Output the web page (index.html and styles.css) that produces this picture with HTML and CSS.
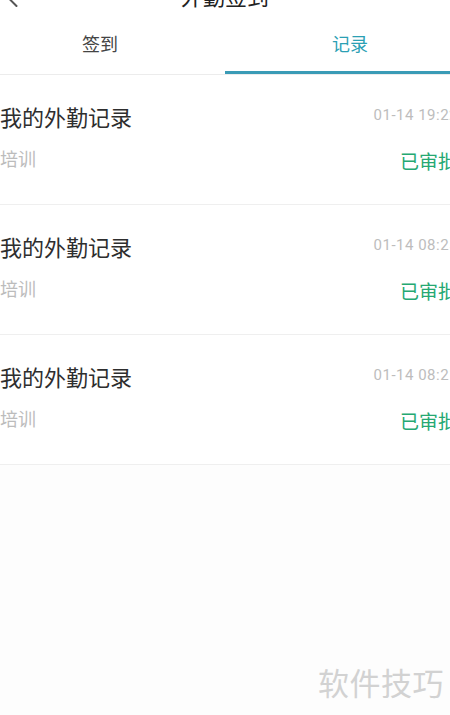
FILE: index.html
```html
<!DOCTYPE html>
<html lang="zh-CN">
<head>
    <meta charset="UTF-8">
    <title>外勤签到</title>
    <link rel="stylesheet" href="styles.css">
</head>
<body>
<div class="page">
    <div class="top_bar">
        <span class="back_btn">
            <svg width="10" height="16" viewBox="0 0 10 16"><polyline points="8.5,1 1.5,8 8.5,15" fill="none" stroke="#555" stroke-width="2" stroke-linecap="round" stroke-linejoin="round"/></svg>
        </span>
        <span class="top_title">外勤签到</span>
        <span></span>
    </div>
    <div class="tab_wrap">
        <div class="tab_item">签到</div>
        <div class="tab_item active">记录</div>
    </div>
    <ul class="record_list">
        <li class="record_item">
            <div class="record_line">
                <span class="record_title">我的外勤记录</span>
                <span class="record_time">01-14 19:22</span>
            </div>
            <div class="record_line">
                <span class="record_type">培训</span>
                <span class="record_state">已审批</span>
            </div>
        </li>
        <li class="record_item">
            <div class="record_line">
                <span class="record_title">我的外勤记录</span>
                <span class="record_time">01-14 08:25</span>
            </div>
            <div class="record_line">
                <span class="record_type">培训</span>
                <span class="record_state">已审批</span>
            </div>
        </li>
        <li class="record_item">
            <div class="record_line">
                <span class="record_title">我的外勤记录</span>
                <span class="record_time">01-14 08:21</span>
            </div>
            <div class="record_line">
                <span class="record_type">培训</span>
                <span class="record_state">已审批</span>
            </div>
        </li>
    </ul>
</div>
<div class="watermark">软件技巧</div>
</body>
</html>
```

FILE: styles.css
```css
* {
    padding: 0;
    margin: 0;
    box-sizing: border-box;
}

html, body {
    height: 100%;
}

body {
    background-color: #fdfdfd;
    font-family: Roboto, "Noto Sans CJK SC", sans-serif;
    color: #333;
    overflow: hidden;
}

.page {
    width: 500px;
    margin-left: -25px;
    background-color: #fff;
}

.top_bar {
    height: 56px;
    margin-top: -48px;
    display: grid;
    grid-template-columns: 1fr auto 1fr;
    align-items: end;
    background-color: #fff;
}
.top_bar .back_btn {
    padding-left: 33px;
    height: 17px;
}
.top_bar .top_title {
    font-family: "Noto Sans CJK SC", sans-serif;
    font-size: 22px;
    line-height: 22px;
    padding-bottom: 2px;
    color: #222;
}

.tab_wrap {
    display: flex;
    border-bottom: 1px solid #ececec;
}
.tab_wrap .tab_item {
    flex: 1;
    height: 66px;
    padding-top: 22px;
    text-align: center;
    font-family: "Noto Sans CJK SC", sans-serif;
    font-size: 18px;
    line-height: 26px;
    color: #444;
}
.tab_wrap .tab_item.active {
    color: #2ba0b4;
    border-bottom: 3px solid #3a9bb6;
}

.record_list {
    list-style: none;
    background-color: #fff;
}
.record_list .record_item {
    height: 130px;
    padding: 26px 18px 0 25px;
    border-bottom: 1px solid #efefef;
}
.record_list .record_line {
    display: flex;
    justify-content: space-between;
    align-items: flex-start;
}
.record_list .record_line + .record_line {
    margin-top: 14px;
}
.record_list .record_title {
    font-family: "Noto Sans CJK SC", sans-serif;
    font-size: 22px;
    line-height: 30px;
    color: #2e2e2e;
}
.record_list .record_time {
    margin-top: 4px;
    margin-right: -1px;
    font-size: 15px;
    line-height: 20px;
    letter-spacing: 0.5px;
    color: #bdbdbd;
}
.record_list .record_type {
    font-family: "Noto Sans CJK SC", sans-serif;
    font-size: 18px;
    line-height: 26px;
    color: #bcbcbc;
}
.record_list .record_state {
    margin-top: 3px;
    font-family: "Noto Sans CJK SC", sans-serif;
    font-size: 19px;
    line-height: 26px;
    color: #25a872;
}

.watermark {
    position: absolute;
    right: 6px;
    top: 662px;
    font-family: "Noto Sans CJK SC", sans-serif;
    font-size: 31px;
    line-height: 40px;
    color: #d2d2d2;
    letter-spacing: 0.5px;
}
```
